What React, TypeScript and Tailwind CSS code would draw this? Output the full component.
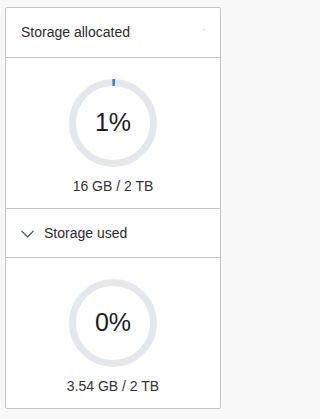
interface RingProps {
  percent: number;
}

function Ring({ percent }: RingProps) {
  const size = 88;
  const stroke = 7;
  const r = (size - stroke) / 2;
  const c = 2 * Math.PI * r;
  const len = (percent / 100) * c;
  return (
    <div className="relative h-[88px] w-[88px]">
      <svg width={size} height={size} className="-rotate-90">
        <circle cx={size / 2} cy={size / 2} r={r} fill="none" stroke="#e4e7eb" strokeWidth={stroke} />
        {percent > 0 && (
          <circle
            cx={size / 2}
            cy={size / 2}
            r={r}
            fill="none"
            stroke="#3a7fc6"
            strokeWidth={stroke}
            strokeDasharray={`${len} ${c}`}
            transform={`rotate(-0.8 ${size / 2} ${size / 2})`}
          />
        )}
      </svg>
      <div className="absolute inset-0 flex items-center justify-center text-[25px] text-[#1d1d1d]">{percent}%</div>
    </div>
  );
}

function Body({ percent, label }: { percent: number; label: string }) {
  return (
    <div className="flex h-[150px] flex-col items-center pt-[21px]">
      <Ring percent={percent} />
      <div className="mt-[9px] text-[14px] leading-5 text-[#333]">{label}</div>
    </div>
  );
}

export default function App() {
  return (
    <div className="min-h-[419px] bg-[#f8f8f9] pt-[7px] pl-[5px] font-['Liberation_Sans',Arial,sans-serif]">
      <div className="w-[216px] rounded-[2px] border border-[#c2c5ca] bg-white">
        <div className="relative flex h-[50px] items-center border-b border-[#c2c5ca] pl-[15px] text-[14px] text-[#2b2b2b]">
          Storage allocated
          <span className="absolute right-[15px] top-[21px] h-px w-px bg-[#c8c8c8]" />
        </div>
        <div className="border-b border-[#c2c5ca]">
          <Body percent={1} label="16 GB / 2 TB" />
        </div>
        <div className="flex h-[49px] items-center gap-[10px] border-b border-[#c2c5ca] pl-[15px] text-[14px] text-[#2b2b2b]">
          <svg width="13" height="8" viewBox="0 0 13 8" className="mt-[1px]">
            <polyline points="0.5,0.8 6.5,6.8 12.5,0.8" fill="none" stroke="#3a4a5e" strokeWidth="1.2" />
          </svg>
          Storage used
        </div>
        <Body percent={0} label="3.54 GB / 2 TB" />
      </div>
    </div>
  );
}
